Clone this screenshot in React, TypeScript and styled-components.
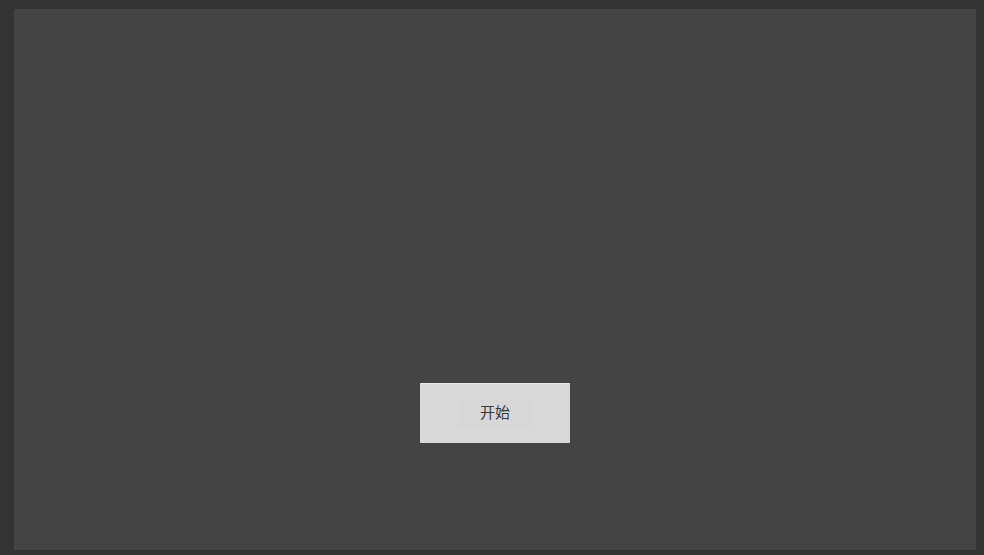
import styled, { createGlobalStyle } from "styled-components";

const GlobalStyle = createGlobalStyle`
    html, body {
        margin: 0;
        padding: 0;
        background: #323232;
        font-family: "Noto Sans CJK SC", "Noto Sans", sans-serif;
    }
`;

const Screen = styled.div`
    width: 984px;
    height: 555px;
    box-sizing: border-box;
    padding: 9px 8px 5px 14px;
    display: flex;
    background: #333333;
`;

const Stage = styled.div`
    flex: 1;
    background: #444444;
    display: flex;
    flex-direction: column;
    align-items: center;
    padding-top: 374px;
`;

const StartButton = styled.button`
    width: 150px;
    height: 60px;
    border: none;
    border-top: 1px solid #ececec;
    border-radius: 1px;
    background: #d9d9d9;
    display: flex;
    align-items: center;
    justify-content: center;
    padding: 0;
    cursor: pointer;
`;

const Label = styled.span`
    width: 75px;
    height: 30px;
    box-sizing: border-box;
    padding-bottom: 5px;
    display: flex;
    align-items: center;
    justify-content: center;
    background: #d7d7d7;
    color: #383838;
    font-size: 15px;
    line-height: 1;
    font-family: "Noto Sans CJK SC", sans-serif;
`;

const App = () => {
    return (
        <>
            <GlobalStyle />
            <Screen>
                <Stage>
                    <StartButton type="button">
                        <Label>开始</Label>
                    </StartButton>
                </Stage>
            </Screen>
        </>
    );
};

export default App;
